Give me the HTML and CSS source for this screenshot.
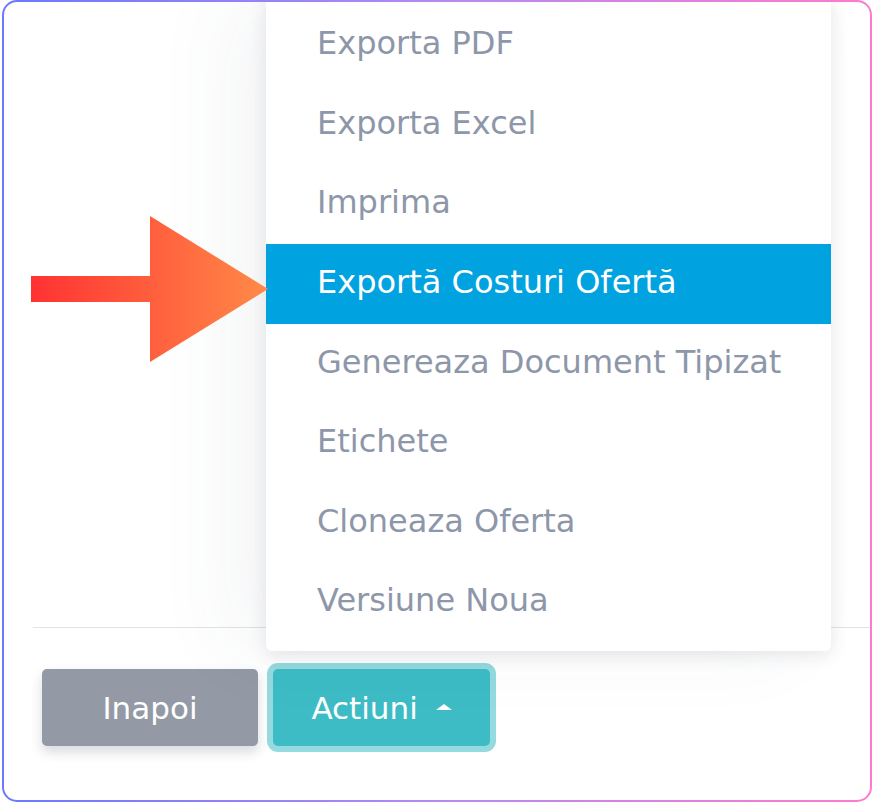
FILE: index.html
```html
<!DOCTYPE html>
<html lang="ro">
<head>
    <meta charset="UTF-8">
    <meta name="viewport" content="width=device-width, initial-scale=1.0">
    <title>Actiuni oferta</title>
    <link rel="stylesheet" href="styles.css">
</head>
<body>
    <div class="frame">
        <div class="content">
            <svg class="pointer" width="240" height="146" viewBox="0 0 240 146">
                <defs>
                    <linearGradient id="arrowFill" x1="0" y1="0" x2="1" y2="0">
                        <stop offset="0" stop-color="#ff3232"/>
                        <stop offset="1" stop-color="#ff8a48"/>
                    </linearGradient>
                </defs>
                <polygon points="0,60 119,60 119,0 237,73 119,146 119,86 0,86" fill="url(#arrowFill)"/>
            </svg>
        </div>
        <div class="footer">
            <button class="btn btn-back" type="button">Inapoi</button>
            <div class="dropup">
                <ul class="menu">
                    <li>Exporta PDF</li>
                    <li>Exporta Excel</li>
                    <li>Imprima</li>
                    <li class="active">Exportă Costuri Ofertă</li>
                    <li>Genereaza Document Tipizat</li>
                    <li>Etichete</li>
                    <li>Cloneaza Oferta</li>
                    <li>Versiune Noua</li>
                </ul>
                <button class="btn btn-actions" type="button">Actiuni <span class="caret"></span></button>
            </div>
        </div>
    </div>
</body>
</html>
```

FILE: styles.css
```css
* {
    margin: 0;
    padding: 0;
    box-sizing: border-box;
}

body {
    background-color: #fff;
    font-family: "DejaVu Sans", sans-serif;
    padding: 0 3px 1px 2px;
}

.frame {
    position: relative;
    height: 802px;
    border: 2px solid transparent;
    border-radius: 15px;
    background: linear-gradient(#fff, #fff) padding-box,
                linear-gradient(90deg, #6b78ff, #b48af0 50%, #ff7acf) border-box;
    display: flex;
    flex-direction: column;
    overflow: hidden;
}

.content {
    flex: 1;
    position: relative;
}

.pointer {
    position: absolute;
    left: 27px;
    top: 214px;
    z-index: 5;
}

.footer {
    margin-left: 29px;
    border-top: 1px solid #dfe4ea;
    height: 173px;
    padding: 41px 0 0 9px;
    display: flex;
    align-items: flex-start;
    gap: 9px;
}

.btn {
    border: none;
    border-radius: 5px;
    color: #fff;
    font-family: inherit;
    font-size: 31px;
    height: 77px;
    cursor: pointer;
}

.btn-back {
    width: 216px;
    background-color: #9399a5;
    box-shadow: 0 6px 12px rgba(40, 50, 70, 0.18);
}

.dropup {
    position: relative;
}

.btn-actions {
    width: 217px;
    background-color: #3dbcc5;
    box-shadow: 0 0 0 6px rgba(61, 188, 197, 0.55);
    margin-left: 6px;
}

.caret {
    display: inline-block;
    margin-left: 8px;
    vertical-align: middle;
    border-left: 8px solid transparent;
    border-right: 8px solid transparent;
    border-bottom: 6px solid #fff;
    position: relative;
    top: -3px;
}

.menu {
    position: absolute;
    left: -1px;
    bottom: calc(100% + 18px);
    width: 565px;
    list-style: none;
    background: #fff;
    border-radius: 6px;
    padding: 9px 0;
    box-shadow: 0 4px 18px rgba(50, 60, 80, 0.12), -40px 0 80px rgba(60, 70, 90, 0.05);
    z-index: 3;
}

.menu li {
    height: 79.6px;
    line-height: 76px;
    padding-left: 51px;
    font-size: 32px;
    color: #8d97a9;
    white-space: nowrap;
}

.menu li.active {
    background-color: #00a2e0;
    color: #fff;
}
```
